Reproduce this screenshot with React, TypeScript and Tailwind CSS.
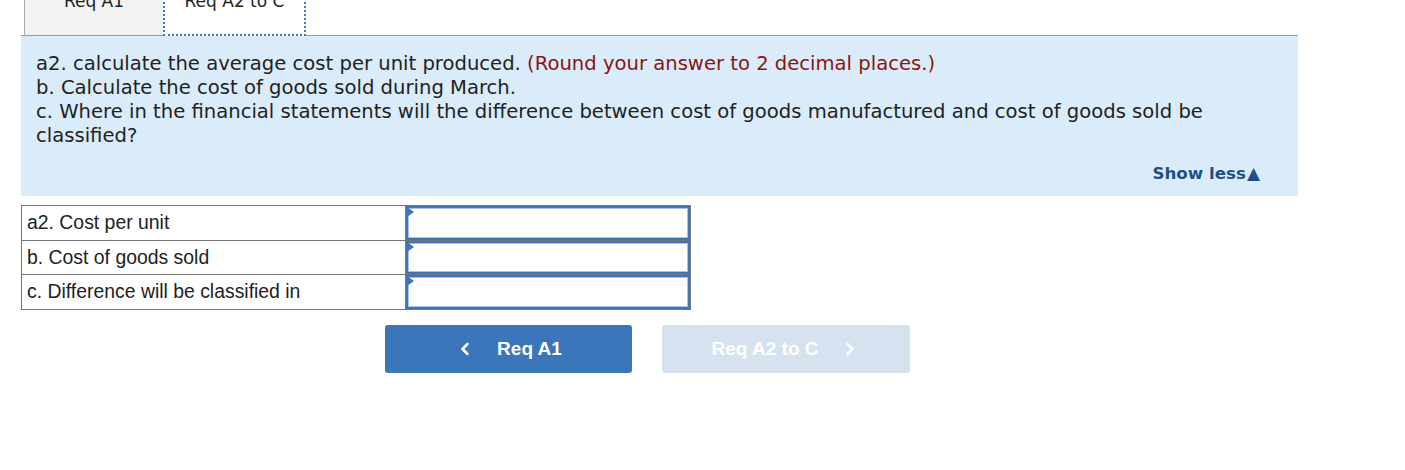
import React from 'react';
import { ChevronLeft, ChevronRight } from 'lucide-react';

const rows = ['a2. Cost per unit', 'b. Cost of goods sold', 'c. Difference will be classified in'];

export default function App() {
    return (
        <div className="min-h-screen bg-white pl-[21px] overflow-hidden">
            <div className="w-[1277px]">
                {/* Tabs */}
                <div className="flex h-[36px] items-end border-b border-[#999] pl-[3px] font-['DejaVu_Sans',sans-serif] text-[17px] leading-[20px] text-[#222]">
                    <div className="flex h-[50px] w-[139px] justify-center border-l border-[#aaa] bg-[#f2f2f2] pt-[6px]">Req A1</div>
                    <div className="-mb-px flex h-[51px] w-[143px] justify-center border-2 border-t-0 border-dotted border-[#3d78c4] bg-white pt-[6px]">
                        Req A2 to C
                    </div>
                </div>

                {/* Instructions */}
                <div className="bg-[#daecf9] px-[15px] pb-[11px] pt-[16px] font-['DejaVu_Sans',sans-serif] text-[19.6px] leading-[24px] text-[#222]">
                    <p>
                        a2. calculate the average cost per unit produced.{' '}
                        <span className="text-[#8b1414]">(Round your answer to 2 decimal places.)</span>
                    </p>
                    <p>b. Calculate the cost of goods sold during March.</p>
                    <p>c. Where in the financial statements will the difference between cost of goods manufactured and cost of goods sold be classified?</p>
                    <div className="mt-[13px] flex items-center justify-end pr-[23px] text-[16.7px] font-bold text-[#1f4e8a]">
                        Show less<span className="ml-[1px] text-[17px] leading-[20px]">▲</span>
                    </div>
                </div>

                {/* Answer table */}
                <table className="mt-[9px] border-collapse font-['Liberation_Sans',sans-serif] text-[19.4px] text-[#222]">
                    <tbody>
                        {rows.map((r, i) => (
                            <tr key={r} className={i === 1 ? 'h-[34px]' : 'h-[35px]'}>
                                <td className="w-[384px] border border-[#777] pl-[5px] align-middle">{r}</td>
                                <td className="relative w-[285px] border border-[#777] p-0">
                                    <div className="absolute inset-0 border-2 border-[#3e74ba] shadow-[inset_0_0_0_1px_#a8c3e6]" />
                                    <div className="absolute left-[1px] top-[1px] h-0 w-0 border-y-[5px] border-l-[7px] border-y-transparent border-l-[#3e74ba]" />
                                </td>
                            </tr>
                        ))}
                    </tbody>
                </table>

                {/* Nav buttons */}
                <div className="mt-[15px] flex gap-[30px] pl-[364px] font-['Liberation_Sans',sans-serif] text-[19px] font-bold text-white">
                    <button className="flex h-[48px] w-[247px] items-center justify-center gap-[22px] rounded-[3px] bg-[#3a76b9]">
                        <ChevronLeft size={20} strokeWidth={3} />
                        <span>Req A1</span>
                    </button>
                    <button className="flex h-[48px] w-[248px] items-center justify-center gap-[22px] rounded-[3px] bg-[#d6e2f0]">
                        <span>Req A2 to C</span>
                        <ChevronRight size={20} strokeWidth={3} />
                    </button>
                </div>
            </div>
        </div>
    );
}
